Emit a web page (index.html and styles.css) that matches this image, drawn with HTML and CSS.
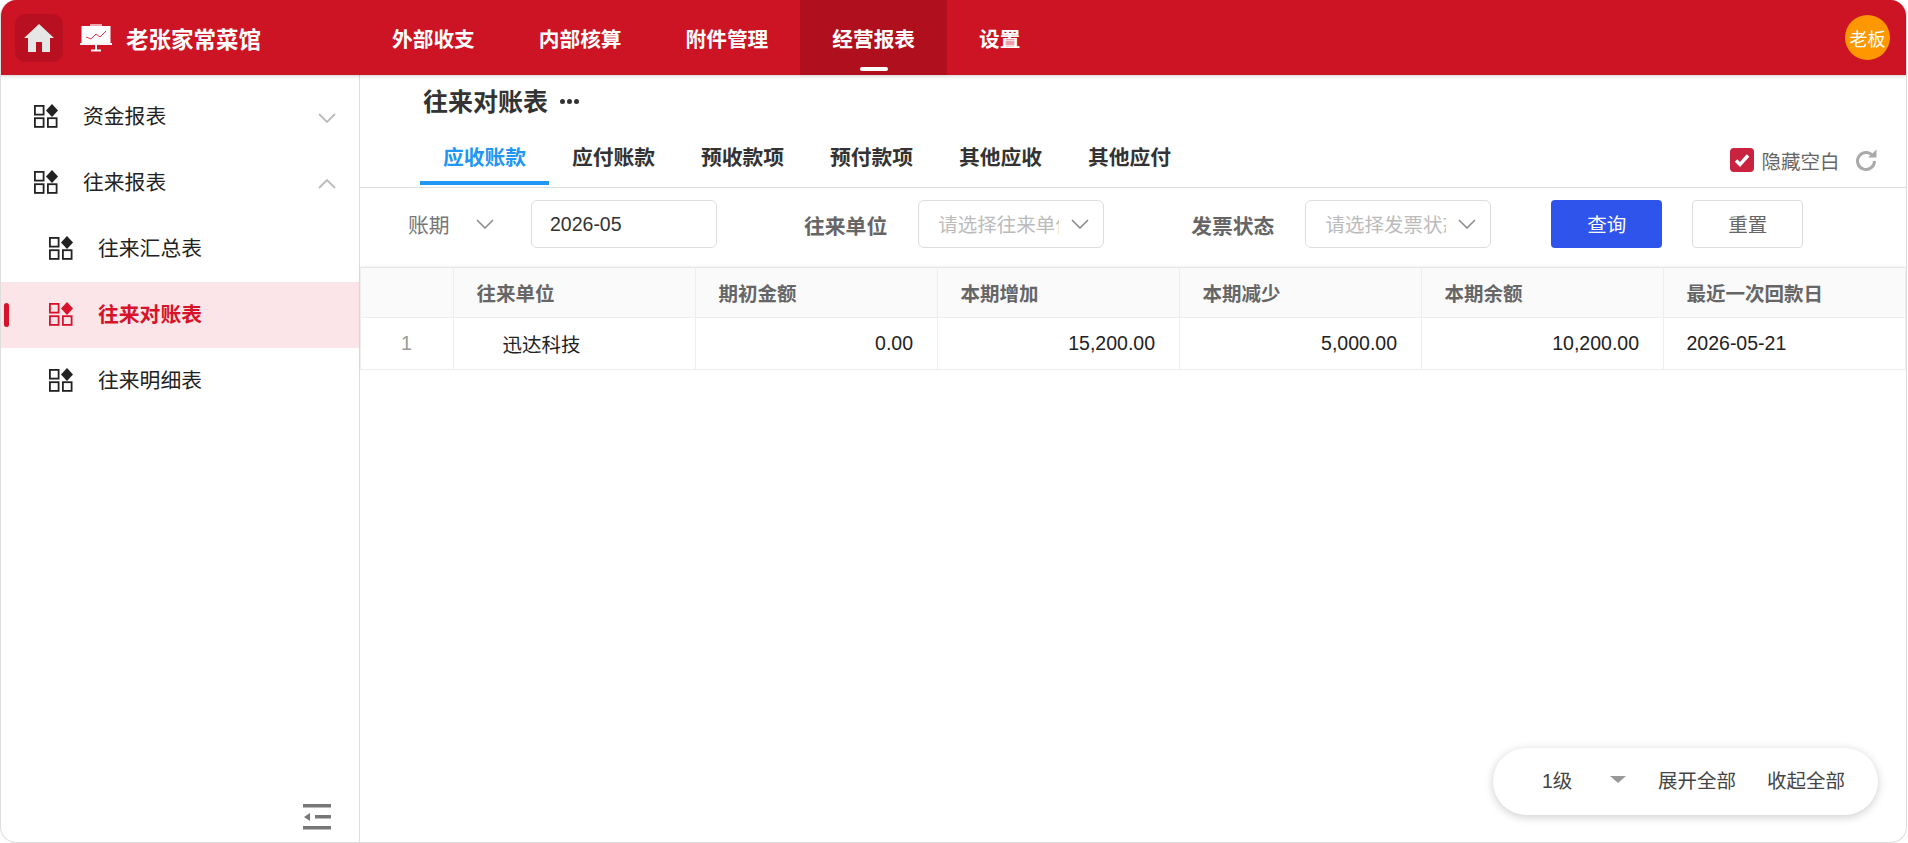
FILE: index.html
```html
<!DOCTYPE html>
<html lang="zh-CN">

<head>
  <meta charset="UTF-8" />
  <title>往来对账表</title>
  <link rel="stylesheet" href="styles.css">
</head>

<body>

<div class="app">
  <!-- 顶部导航 -->
  <header class="topbar">
    <a class="home-btn">
      <svg width="30" height="28" viewBox="0 0 30 28"><path d="M15 0 L30 14 H26 V28 H18 V18 H12 V28 H4 V14 H0 Z" fill="#e6e6e6"/></svg>
    </a>
    <svg class="brand-icon" width="32" height="28" viewBox="0 0 32 28">
      <rect x="10" y="0" width="12" height="4" fill="#f0a8b0"/>
      <rect x="1.500" y="2" width="29" height="17" fill="#fff"/>
      <rect x="0" y="19" width="32" height="2" fill="#f4f4f4"/>
      <path d="M6 13 L11 15 L16 10 L20 13 L26 7" fill="none" stroke="#e0394c" stroke-width="1"/>
      <rect x="15" y="21" width="2" height="5" fill="#fff"/>
      <rect x="11" y="25.500" width="10" height="2" fill="#f4f4f4"/>
    </svg>
    <span class="brand-name">老张家常菜馆</span>
    <nav class="topnav">
      <a class="topnav-item">外部收支</a>
      <a class="topnav-item">内部核算</a>
      <a class="topnav-item">附件管理</a>
      <a class="topnav-item active">经营报表</a>
      <a class="topnav-item">设置</a>
    </nav>
    <span class="avatar">老板</span>
  </header>

  <div class="body">
    <!-- 左侧菜单 -->
    <aside class="sidebar">
      <ul class="menu">
        <li class="menu-item">
          <svg class="menu-icon" viewBox="0 0 24 24"><use href="#grid"/></svg>
          <span>资金报表</span>
          <svg class="menu-arrow" viewBox="0 0 18 10"><path d="M1 1 L9 9 L17 1"/></svg>
        </li>
        <li class="menu-item">
          <svg class="menu-icon" viewBox="0 0 24 24"><use href="#grid"/></svg>
          <span>往来报表</span>
          <svg class="menu-arrow" viewBox="0 0 18 10"><path d="M1 9 L9 1 L17 9"/></svg>
        </li>
        <li class="menu-item sub">
          <svg class="menu-icon" viewBox="0 0 24 24"><use href="#grid"/></svg>
          <span>往来汇总表</span>
        </li>
        <li class="menu-item sub active">
          <svg class="menu-icon" viewBox="0 0 24 24"><use href="#grid"/></svg>
          <span>往来对账表</span>
        </li>
        <li class="menu-item sub">
          <svg class="menu-icon" viewBox="0 0 24 24"><use href="#grid"/></svg>
          <span>往来明细表</span>
        </li>
      </ul>
      <div class="collapse-row">
        <svg width="28" height="26" viewBox="0 0 28 26" fill="#777">
          <rect x="0" y="0" width="28" height="3.500"/>
          <path d="M1 13 L7 9 V17 Z"/>
          <rect x="12" y="11" width="16" height="3.500"/>
          <rect x="0" y="22" width="28" height="3.500"/>
        </svg>
      </div>
    </aside>

    <!-- 内容区 -->
    <main class="content">
      <div class="page-title">
        <h1>往来对账表</h1>
        <span class="more-dots"><i></i><i></i><i></i></span>
      </div>

      <div class="tabs">
        <a class="tab active">应收账款</a>
        <a class="tab">应付账款</a>
        <a class="tab">预收款项</a>
        <a class="tab">预付款项</a>
        <a class="tab">其他应收</a>
        <a class="tab">其他应付</a>
        <div class="tabs-right">
          <span class="check-box">
            <svg width="16" height="14" viewBox="0 0 16 14"><path d="M2 7.500 L6 11.500 L14 2.500" fill="none" stroke="#fff" stroke-width="3.400"/></svg>
          </span>
          <span class="check-label">隐藏空白</span>
          <svg class="refresh" width="22" height="22" viewBox="0 0 22 22">
            <path d="M17.500 6.500 A8.500 8.500 0 1 0 19.500 12" fill="none" stroke="#aaa" stroke-width="3"/>
            <path d="M13 8.500 L21.500 8.500 L21.500 0.500 Z" fill="#aaa"/>
          </svg>
        </div>
      </div>

      <div class="filters">
        <div class="period-select">
          <span>账期</span>
          <svg class="chevron" viewBox="0 0 18 10"><path d="M1 1 L9 9 L17 1"/></svg>
        </div>
        <div class="field date-field">2026-05</div>
        <label class="filter-label unit-label">往来单位</label>
        <div class="field select-field">
          <span class="placeholder">请选择往来单位</span>
          <svg class="chevron" viewBox="0 0 18 10"><path d="M1 1 L9 9 L17 1"/></svg>
        </div>
        <label class="filter-label status-label">发票状态</label>
        <div class="field select-field">
          <span class="placeholder">请选择发票状态</span>
          <svg class="chevron" viewBox="0 0 18 10"><path d="M1 1 L9 9 L17 1"/></svg>
        </div>
        <button class="btn btn-primary">查询</button>
        <button class="btn btn-default">重置</button>
      </div>

      <table class="report">
        <colgroup>
          <col class="col-index">
          <col><col><col><col><col><col>
        </colgroup>
        <thead>
          <tr>
            <th></th>
            <th>往来单位</th>
            <th>期初金额</th>
            <th>本期增加</th>
            <th>本期减少</th>
            <th>本期余额</th>
            <th>最近一次回款日</th>
          </tr>
        </thead>
        <tbody>
          <tr>
            <td class="index">1</td>
            <td class="name">迅达科技</td>
            <td class="num">0.00</td>
            <td class="num">15,200.00</td>
            <td class="num">5,000.00</td>
            <td class="num">10,200.00</td>
            <td>2026-05-21</td>
          </tr>
        </tbody>
      </table>

      <div class="level-pill">
        <span class="level-value">1级</span>
        <span class="level-caret"></span>
        <a>展开全部</a>
        <a>收起全部</a>
      </div>
    </main>
  </div>
</div>

<svg class="defs" width="0" height="0">
  <symbol id="grid" viewBox="0 0 24 24">
    <g fill="none" stroke="currentColor" stroke-width="1.800">
      <rect x="0.900" y="1.900" width="8.700" height="8.700"/>
      <rect x="0.900" y="14.200" width="8.700" height="8.700"/>
      <rect x="13.900" y="14.200" width="8.700" height="8.700"/>
    </g>
    <path d="M18 0 L24 6.500 L18 13 L12 6.500 Z" fill="currentColor"/>
  </symbol>
</svg>

</body>
</html>
```

FILE: styles.css
```css
* {
  box-sizing: border-box;
}
body {
  margin: 0;
  background: #fff;
  font-family: "Liberation Sans", "Noto Sans CJK SC", sans-serif;
  color: #333;
}
ul {
  list-style: none;
  margin: 0;
  padding: 0;
}
.defs {
  position: absolute;
}

.app {
  width: 1907px;
  height: 843px;
  display: flex;
  flex-direction: column;
  border: 1px solid #ddd;
  border-top: none;
  border-radius: 16px;
  overflow: hidden;
}

/* 顶部导航 */
.topbar {
  flex: none;
  height: 75px;
  display: flex;
  align-items: center;
  margin-left: -1px;
  background: #cc1424;
  box-shadow: 0 1px 4px rgba(0, 0, 0, 0.2);
  position: relative;
  z-index: 2;
}
.home-btn {
  width: 48px;
  height: 48px;
  margin-left: 15px;
  display: flex;
  align-items: center;
  justify-content: center;
  background: #b81020;
  border-radius: 10px;
}
.brand-icon {
  margin-left: 17px;
}
.brand-name {
  margin-left: 14px;
  width: 234px;
  font-size: 22.500px;
  font-weight: 700;
  color: #fff;
}
.topnav {
  display: flex;
  height: 75px;
}
.topnav-item {
  position: relative;
  padding: 0 32px;
  display: flex;
  align-items: center;
  font-size: 20.700px;
  font-weight: 700;
  color: #fff;
}
.topnav-item.active {
  background: #b00f1d;
}
.topnav-item.active::after {
  content: "";
  position: absolute;
  left: 50%;
  bottom: 4px;
  width: 28px;
  height: 4px;
  margin-left: -14px;
  border-radius: 2px;
  background: #fff;
}
.avatar {
  width: 45px;
  height: 45px;
  margin-left: auto;
  margin-right: 16px;
  display: flex;
  align-items: center;
  justify-content: center;
  border-radius: 50%;
  background: #ff9800;
  color: #fff;
  font-size: 18px;
}

.body {
  flex: 1;
  display: flex;
  min-height: 0;
}

/* 左侧菜单 */
.sidebar {
  flex: none;
  width: 359px;
  display: flex;
  flex-direction: column;
  border-right: 1px solid #ddd;
}
.menu {
  flex: 1;
  padding-top: 9px;
}
.menu-item {
  position: relative;
  height: 66px;
  display: flex;
  align-items: center;
  padding: 0 0 3px 33px;
  font-size: 20.800px;
  color: #222;
}
.menu-item span {
  margin-bottom: 2px;
}
.menu-item.sub {
  padding-left: 48px;
}
.menu-item.active {
  background: #fbe5e8;
  color: #d6132a;
  font-weight: 700;
}
.menu-item.active::before {
  content: "";
  position: absolute;
  left: 3px;
  top: 21px;
  width: 5px;
  height: 24px;
  border-radius: 3px;
  background: #d6132a;
}
.menu-icon {
  width: 24px;
  height: 24px;
  margin-right: 25px;
  color: #222;
}
.active .menu-icon {
  color: #d6132a;
}
.menu-arrow {
  position: absolute;
  right: 23px;
  top: 29px;
  width: 18px;
  height: 10px;
  fill: none;
  stroke: #bbb;
  stroke-width: 1.800;
}
.collapse-row {
  display: flex;
  justify-content: flex-end;
  padding: 0 28px 12px 0;
}

/* 内容区 */
.content {
  position: relative;
  flex: 1;
  min-width: 0;
}
.page-title {
  height: 54px;
  display: flex;
  align-items: flex-end;
  padding: 0 0 8px 63px;
  color: #333;
}
.page-title h1 {
  margin: 0;
  font-size: 25px;
  line-height: 38px;
  font-weight: 700;
}
.more-dots {
  display: flex;
  gap: 2px;
  margin: 0 0 17px 12px;
}
.more-dots i {
  width: 5px;
  height: 5px;
  border-radius: 50%;
  background: #333;
}
.tabs {
  height: 59px;
  display: flex;
  padding-left: 60px;
  border-bottom: 1px solid #ddd;
}
.tab {
  width: 129px;
  padding-top: 14px;
  text-align: center;
  font-size: 20.800px;
  line-height: 30px;
  font-weight: 700;
  color: #333;
  border-bottom: 4px solid transparent;
  height: 56px;
}
.tab.active {
  color: #2196f3;
  border-bottom-color: #2196f3;
}
.tabs-right {
  margin-left: auto;
  display: flex;
  align-items: center;
  height: 56px;
  padding: 6px 29px 0 0;
}
.check-box {
  width: 24px;
  height: 24px;
  display: flex;
  align-items: center;
  justify-content: center;
  border-radius: 4px;
  background: #c9233f;
}
.check-label {
  margin: 0 15.500px 0 7px;
  font-size: 19.500px;
  color: #666;
}

.filters {
  height: 79px;
  display: flex;
  align-items: center;
  padding: 0 0 7px 48px;
}
.period-select {
  width: 123px;
  display: flex;
  align-items: center;
  font-size: 20.800px;
  color: #777;
}
.chevron {
  width: 18px;
  height: 10px;
  fill: none;
  stroke: #888;
  stroke-width: 1.500;
  flex: none;
}
.period-select .chevron {
  margin-left: 26px;
  margin-top: -1px;
}
.field {
  height: 48px;
  display: flex;
  align-items: center;
  border: 1px solid #ddd;
  border-radius: 6px;
  background: #fff;
  font-size: 19.500px;
}
.date-field {
  width: 186px;
  padding-left: 18px;
  color: #333;
}
.select-field {
  width: 186px;
  padding: 0 14px 0 19px;
}
.placeholder {
  width: 126px;
  margin-bottom: 2px;
  overflow: hidden;
  white-space: nowrap;
  color: #bbb;
}
.select-field .chevron {
  margin-left: 12px;
  margin-top: -1px;
}
.filter-label {
  font-size: 20.800px;
  font-weight: 700;
  color: #666;
  padding-top: 2px;
}
.unit-label {
  margin: 0 31px 0 87px;
}
.status-label {
  margin: 0 31px 0 87px;
}
.btn {
  width: 111px;
  height: 48px;
  padding: 0 0 2px;
  border-radius: 4px;
  font-family: inherit;
  font-size: 19.500px;
}
.btn-primary {
  margin-left: 60px;
  border: none;
  background: #2f54eb;
  color: #fff;
}
.btn-default {
  margin-left: 30px;
  border: 1px solid #ddd;
  background: #fff;
  color: #666;
}

.report {
  width: 100%;
  table-layout: fixed;
  border-collapse: collapse;
  border-top: 1px solid #e4e4e4;
  box-shadow: 0 -1px 3px rgba(0, 0, 0, 0.05);
  font-size: 19.500px;
}
.col-index {
  width: 93px;
}
.report th,
.report td {
  padding: 0 22.500px;
  border: 1px solid #eee;
  border-top: none;
  text-align: left;
  white-space: nowrap;
}
.report th {
  height: 50px;
  background: #fafafa;
  font-weight: 700;
  color: #666;
}
.report td {
  height: 52px;
  color: #222;
}
.report td.index {
  padding-left: 40px;
  color: #999;
}
.report td.name {
  padding-left: 48.500px;
}
.report td.num {
  text-align: right;
  padding-right: 24px;
}

/* 右下角层级切换 */
.level-pill {
  position: absolute;
  right: 28px;
  bottom: 27px;
  width: 385px;
  height: 67px;
  display: flex;
  align-items: center;
  padding: 0 0 4px 49px;
  border-radius: 34px;
  background: #fff;
  box-shadow: 0 2px 10px rgba(0, 0, 0, 0.2);
  font-size: 19.500px;
  color: #444;
}
.level-value {
  width: 68px;
}
.level-caret {
  width: 0;
  height: 0;
  border-left: 8px solid transparent;
  border-right: 8px solid transparent;
  border-top: 7px solid #999;
  margin-right: 32px;
}
.level-pill a + a {
  margin-left: 31px;
}
```
